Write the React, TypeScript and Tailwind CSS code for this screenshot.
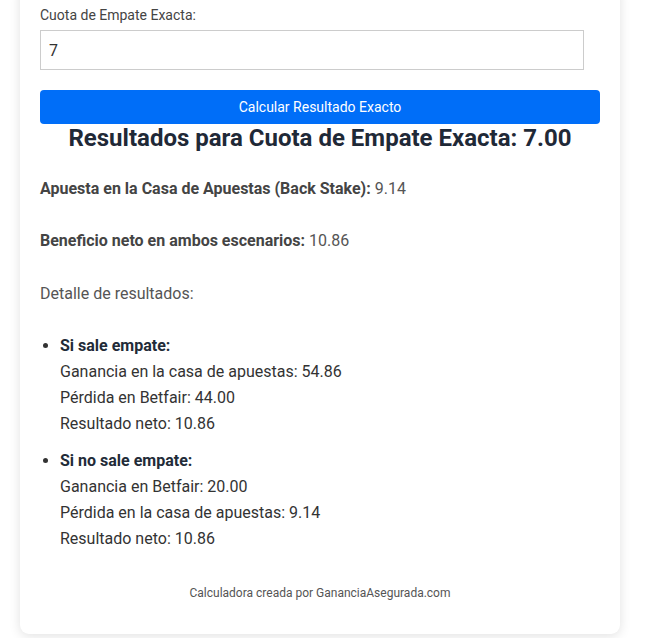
import React from "react";

// Scenario rows shown in the detail list
type Scenario = {
  title: string;
  lines: string[];
};

const scenarios: Scenario[] = [
  {
    title: "Si sale empate:",
    lines: [
      "Ganancia en la casa de apuestas: 54.86",
      "Pérdida en Betfair: 44.00",
      "Resultado neto: 10.86",
    ],
  },
  {
    title: "Si no sale empate:",
    lines: [
      "Ganancia en Betfair: 20.00",
      "Pérdida en la casa de apuestas: 9.14",
      "Resultado neto: 10.86",
    ],
  },
];

const App: React.FC = () => {
  return (
    <div
      className="min-h-[638px] w-full bg-white overflow-hidden"
      style={{ fontFamily: "Roboto, 'Noto Sans', sans-serif" }}
    >
      <div className="ml-[20px] mt-[-15px] w-[600px] rounded-[9px] bg-white px-[20px] pt-[20px] pb-[32px] shadow-[0_2px_12px_rgba(0,0,0,0.12)]">
        {/* Form */}
        <label className="block text-[14px] leading-[20px] text-[#444]">
          Cuota de Empate Exacta:
        </label>
        <input
          type="text"
          defaultValue="7"
          className="mt-[5px] block h-[40px] w-[544px] border border-[#ccc] px-[8px] text-[16px] text-[#333] outline-none"
        />
        <button className="mt-[20px] block h-[34px] w-full rounded-[4px] bg-[#006ef8] text-[14px] text-white">
          Calcular Resultado Exacto
        </button>

        {/* Results */}
        <h2 className="text-center text-[24px] font-bold leading-[28px] text-[#1f2937]">
          Resultados para Cuota de Empate Exacta: 7.00
        </h2>

        <div className="text-[16px] leading-[26px] text-[#555]">
          <p className="mt-[24px]">
            <strong className="font-bold text-[#444]">
              Apuesta en la Casa de Apuestas (Back Stake):
            </strong>{" "}
            9.14
          </p>
          <p className="mt-[26px]">
            <strong className="font-bold text-[#444]">
              Beneficio neto en ambos escenarios:
            </strong>{" "}
            10.86
          </p>
          <p className="mt-[27px]">Detalle de resultados:</p>

          <ul className="mt-[26px] list-disc pl-[20px] text-[#333]">
            {scenarios.map((s, idx) => (
              <li key={s.title} className={idx > 0 ? "mt-[11px]" : ""}>
                <strong className="font-bold text-[#222b38]">{s.title}</strong>
                {s.lines.map((line) => (
                  <div key={line}>{line}</div>
                ))}
              </li>
            ))}
          </ul>
        </div>

        <p className="mt-[32px] text-center text-[12px] leading-[18px] text-[#555]">
          Calculadora creada por GananciaAsegurada.com
        </p>
      </div>
    </div>
  );
};

export default App;
